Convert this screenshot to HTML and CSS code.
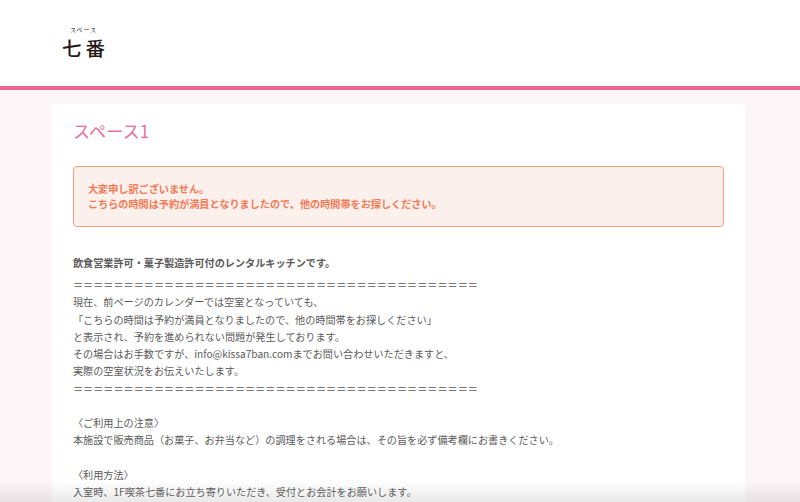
FILE: index.html
```html
<!DOCTYPE html>
<html lang="ja">
<head>
<meta charset="utf-8">
<title>スペース1</title>
<link rel="stylesheet" href="styles.css">
</head>
<body>
<header class="site-header">
  <div class="logo">
    <span class="logo-sub">スペース</span>
    <span class="logo-main">七番</span>
  </div>
</header>
<main class="page">
  <section class="card">
    <h1 class="title">スペース1</h1>
    <div class="alert">大変申し訳ございません。<br>こちらの時間は予約が満員となりましたので、他の時間帯をお探しください。</div>
    <p class="lead">飲食営業許可・菓子製造許可付のレンタルキッチンです。</p>
    <p class="body">＝＝＝＝＝＝＝＝＝＝＝＝＝＝＝＝＝＝＝＝＝＝＝＝＝＝＝＝＝＝＝＝＝＝＝＝＝＝＝＝<br>現在、前ページのカレンダーでは空室となっていても、<br>「こちらの時間は予約が満員となりましたので、他の時間帯をお探しください」<br>と表示され、予約を進められない問題が発生しております。<br>その場合はお手数ですが、info@kissa7ban.comまでお問い合わせいただきますと、<br>実際の空室状況をお伝えいたします。<br>＝＝＝＝＝＝＝＝＝＝＝＝＝＝＝＝＝＝＝＝＝＝＝＝＝＝＝＝＝＝＝＝＝＝＝＝＝＝＝＝<br><br>〈ご利用上の注意〉<br>本施設で販売商品（お菓子、お弁当など）の調理をされる場合は、その旨を必ず備考欄にお書きください。<br><br>〈利用方法〉<br>入室時、1F喫茶七番にお立ち寄りいただき、受付とお会計をお願いします。</p>
  </section>
</main>
<div class="fade"></div>
</body>
</html>
```
FILE: styles.css
```css
html, body {
  margin: 0;
  height: 502px;
  overflow: hidden;
}
body {
  background: #fdf6f8;
  font-family: "Noto Sans CJK JP", "Noto Sans", sans-serif;
  color: #5a5a5a;
  position: relative;
}
.site-header {
  height: 86px;
  background: #fff;
  border-bottom: 4px solid #ea6795;
  padding-left: 62px;
  display: flex;
  align-items: flex-start;
}
.logo {
  display: flex;
  flex-direction: column;
  align-items: center;
  width: 47px;
  padding-top: 26px;
  color: #231815;
}
.logo-sub {
  font-size: 6px;
  line-height: 8px;
  letter-spacing: 0.9px;
  margin-right: 4px;
}
.logo-main {
  font-size: 19.5px;
  font-weight: 500;
  line-height: 24px;
  letter-spacing: 4px;
  margin-top: 2px;
  white-space: nowrap;
}
.page {
  padding: 14px 55px 0 52px;
}
.card {
  background: #fff;
  border-radius: 4px 4px 0 0;
  padding: 14px 21px 0;
  height: 384px;
}
.title {
  margin: 0;
  font-size: 17.2px;
  font-weight: 400;
  line-height: 26px;
  color: #ea6f9c;
}
.alert {
  margin-top: 22px;
  height: 61px;
  box-sizing: border-box;
  border: 1px solid #fb9b7e;
  border-radius: 4px;
  background: #fcf0ec;
  color: #f47a55;
  font-size: 10.15px;
  font-weight: 700;
  line-height: 15px;
  padding: 14px 14px;
}
.lead {
  margin: 27px 0 0;
  font-size: 10.15px;
  font-weight: 700;
  line-height: 17.25px;
}
.body {
  margin: 4.75px 0 0;
  font-size: 10.15px;
  line-height: 17.25px;
  white-space: nowrap;
}
.fade {
  position: absolute;
  left: 0;
  right: 0;
  bottom: 0;
  height: 22px;
  background: linear-gradient(rgba(120,120,120,0), rgba(120,120,120,0.16));
}
```
